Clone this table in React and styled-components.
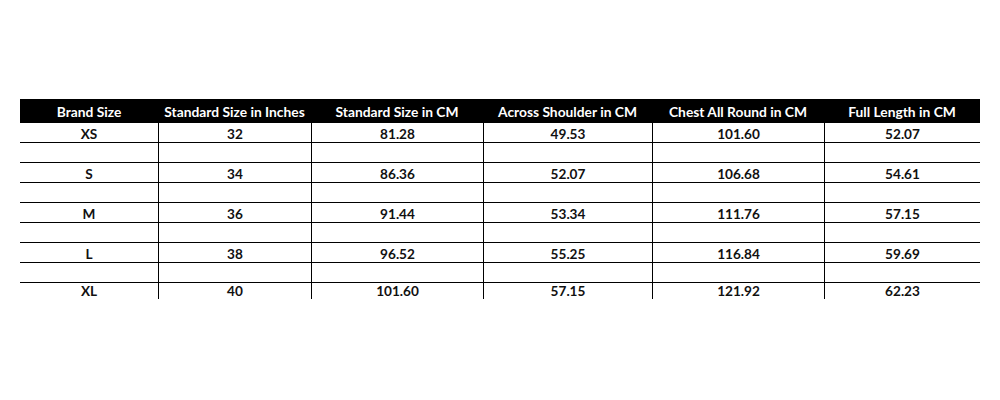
import React from "react";
import styled, { createGlobalStyle } from "styled-components";

const Global = createGlobalStyle`
  html, body { margin: 0; padding: 0; background: #fff; }
  body { font-family: Lato, "Open Sans", sans-serif; }
`;

const Page = styled.div`
  width: 1000px;
  height: 400px;
  padding: 99px 20px 0;
  box-sizing: border-box;
`;

const Table = styled.div`
  display: grid;
  grid-template-columns: 138px 153px 172px 169px 172px 156px;
  width: 960px;
`;

const HeadCell = styled.div`
  height: 24px;
  background: #000;
  color: #fff;
  font-weight: 700;
  font-size: 13.8px;
  display: flex;
  align-items: center;
  justify-content: center;
  white-space: nowrap;
`;

const Cell = styled.div`
  box-sizing: border-box;
  height: ${(p) => (p.$last ? 16 : 20)}px;
  border-bottom: ${(p) => (p.$last ? "none" : "1px solid #000")};
  border-left: ${(p) => (p.$first ? "none" : "1px solid #000")};
  color: #111;
  font-weight: 700;
  font-size: 13.6px;
  display: flex;
  align-items: ${(p) => (p.$last ? "flex-end" : "center")};
  padding-top: ${(p) => (p.$last ? "0" : "2px")};
  justify-content: center;
  overflow: hidden;
  line-height: 16px;
`;

const headers = [
  "Brand Size",
  "Standard Size in Inches",
  "Standard Size in CM",
  "Across Shoulder in CM",
  "Chest All Round in CM",
  "Full Length in CM",
];

const data = [
  ["XS", "32", "81.28", "49.53", "101.60", "52.07"],
  null,
  ["S", "34", "86.36", "52.07", "106.68", "54.61"],
  null,
  ["M", "36", "91.44", "53.34", "111.76", "57.15"],
  null,
  ["L", "38", "96.52", "55.25", "116.84", "59.69"],
  null,
  ["XL", "40", "101.60", "57.15", "121.92", "62.23"],
];

export default function App() {
  return (
    <>
      <Global />
      <Page>
        <Table>
          {headers.map((h) => (
            <HeadCell key={h}>{h}</HeadCell>
          ))}
          {data.map((row, ri) =>
            headers.map((_, ci) => (
              <Cell
                key={`${ri}-${ci}`}
                $first={ci === 0}
                $last={ri === data.length - 1}
              >
                {row ? row[ci] : ""}
              </Cell>
            ))
          )}
        </Table>
      </Page>
    </>
  );
}
